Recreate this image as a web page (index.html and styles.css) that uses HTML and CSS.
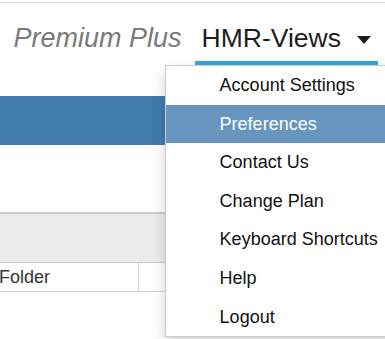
FILE: index.html
```html
<!DOCTYPE html>
<html lang="en">
<head>
  <meta charset="UTF-8">
  <title>HMR-Views</title>
  <link rel="stylesheet" href="styles.css">
</head>
<body>
  <div class="page">

    <div class="topbar">
      <span class="plan">Premium Plus</span>
      <div class="account">
        <span class="account-name">HMR-Views</span>
        <span class="caret"></span>

        <ul class="menu">
          <li>Account Settings</li>
          <li class="active">Preferences</li>
          <li>Contact Us</li>
          <li>Change Plan</li>
          <li>Keyboard Shortcuts</li>
          <li>Help</li>
          <li>Logout</li>
        </ul>
      </div>
    </div>

    <div class="banner"></div>

    <div class="toolbar"></div>

    <div class="table-row">
      <div class="cell name">Folder</div>
      <div class="cell"></div>
    </div>

  </div>
</body>
</html>
```

FILE: styles.css
```css
body {
  margin: 0;
  padding: 0;
  font-family: 'Liberation Sans', Arial, sans-serif;
  background: white;
}

.page {
  position: relative;
  height: 339px;
  overflow: hidden;
}

.topbar {
  margin-top: 2px;
  border-top: 1px solid #dcdcdc;
  display: flex;
  justify-content: flex-end;
  align-items: flex-start;
  padding-right: 7px;
}

.plan {
  padding-top: 20px;
  margin-right: 13px;
  font-size: 27px;
  line-height: 30px;
  font-style: italic;
  color: #7a7a7a;
}

.account {
  position: relative;
  display: flex;
  align-items: center;
  padding: 20px 7px 8px;
  border-bottom: 4px solid #2ea8e5;
}

.account-name {
  font-size: 26.5px;
  line-height: 30px;
  color: #1e1e1e;
}

.caret {
  margin-left: 16px;
  margin-top: 4px;
  width: 0;
  height: 0;
  border-top: 8px solid #1e1e1e;
  border-left: 7px solid transparent;
  border-right: 7px solid transparent;
}

.menu {
  position: absolute;
  top: 100%;
  left: -30px;
  width: 240px;
  margin: 4px 0 0;
  padding: 0;
  list-style: none;
  background: white;
  border: 1px solid #cccccc;
  box-shadow: 0 6px 12px rgba(0, 0, 0, 0.18);
  z-index: 10;
}

.menu li {
  padding: 9px 0 9px 54px;
  font-size: 18px;
  line-height: 20.6px;
  color: #111;
}

.menu li.active {
  background: #6795c0;
  color: white;
}

.banner {
  margin-top: 31px;
  height: 49px;
  background: #417bab;
}

.toolbar {
  margin-top: 67px;
  height: 48px;
  background: #ebebeb;
  border-top: 2px solid #cccccc;
  border-bottom: 1px solid #cccccc;
}

.table-row {
  display: flex;
  height: 28px;
  border-bottom: 1px solid #cccccc;
}

.cell {
  font-size: 18px;
  line-height: 28px;
  color: #333;
}

.cell.name {
  width: 139px;
  margin-left: -1px;
  border-right: 1px solid #cccccc;
}
```
